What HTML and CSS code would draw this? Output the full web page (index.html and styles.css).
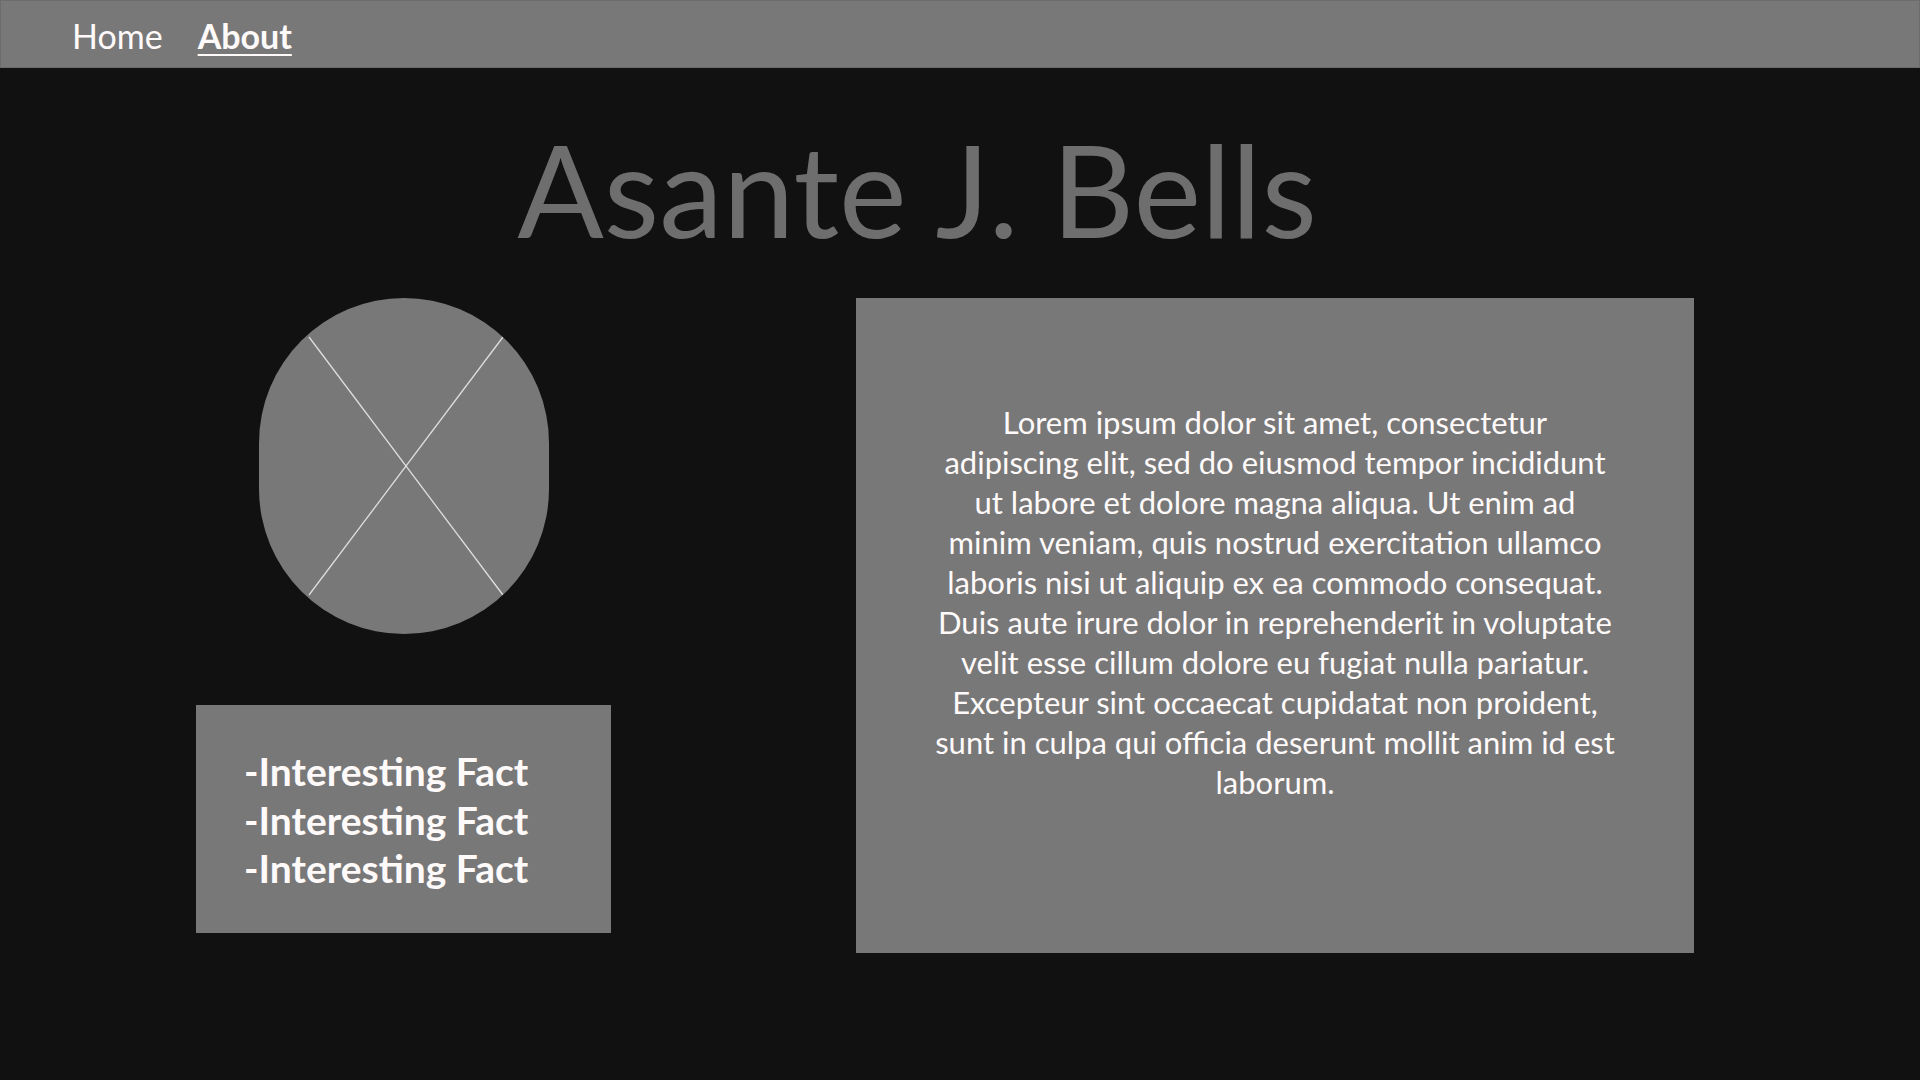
FILE: index.html
```html
<!DOCTYPE html>
<html lang="en">
<head>
    <meta charset="UTF-8">
    <title>About - Asante J. Bells</title>
    <link rel="stylesheet" href="styles.css">
</head>
<body>
    <nav class="topnav">
        <a href="#" class="nav-link">Home</a>
        <a href="#" class="nav-link active">About</a>
    </nav>

    <h1 class="title">Asante J. Bells</h1>

    <main class="content">
        <div class="side">
            <div class="photo">
                <svg viewBox="0 0 290 336" width="290" height="336">
                    <line x1="50" y1="39" x2="244" y2="297" />
                    <line x1="244" y1="39" x2="50" y2="297" />
                </svg>
            </div>

            <ul class="facts">
                <li>-Interesting Fact</li>
                <li>-Interesting Fact</li>
                <li>-Interesting Fact</li>
            </ul>
        </div>

        <section class="bio">
            <p>Lorem ipsum dolor sit amet, consectetur adipiscing elit, sed do eiusmod tempor incididunt ut labore et dolore magna aliqua. Ut enim ad minim veniam, quis nostrud exercitation ullamco laboris nisi ut aliquip ex ea commodo consequat. Duis aute irure dolor in reprehenderit in voluptate velit esse cillum dolore eu fugiat nulla pariatur. Excepteur sint occaecat cupidatat non proident, sunt in culpa qui officia deserunt mollit anim id est laborum.</p>
        </section>
    </main>
</body>
</html>
```

FILE: styles.css
```css
* {
    margin: 0;
    padding: 0;
    box-sizing: border-box;
}

body {
    font-family: Lato, 'Open Sans', sans-serif;
    background: #111111;
    min-height: 100vh;
    color: #fffafa;
}

.topnav {
    height: 68px;
    background: #787878;
    border: 1px solid #6c6c6c;
    display: flex;
    align-items: center;
    gap: 35px;
    padding: 3px 71px 0;
}

.nav-link {
    color: #fffafa;
    font-size: 34px;
    text-decoration: none;
}

.nav-link.active {
    font-weight: 700;
    text-decoration: underline;
    text-decoration-thickness: 2px;
    text-underline-offset: 5px;
}

.title {
    margin-top: 57px;
    padding-right: 86px;
    font-size: 128px;
    font-weight: 400;
    line-height: 1;
    color: #6e6e6e;
    text-align: center;
}

.content {
    margin-top: 45px;
    padding-left: 196px;
    display: flex;
    gap: 245px;
    align-items: flex-start;
}

.side {
    width: 415px;
    display: flex;
    flex-direction: column;
    align-items: center;
    gap: 71px;
}

.photo {
    width: 290px;
    height: 336px;
    border-radius: 145px;
    background: #787878;
    overflow: hidden;
}

.photo svg {
    display: block;
}

.photo line {
    stroke: #dedede;
    stroke-width: 1.3;
}

.facts {
    list-style: none;
    width: 100%;
    height: 228px;
    background: #787878;
    padding: 42px 48px;
    font-size: 39px;
    font-weight: 700;
    line-height: 48.5px;
}

.bio {
    width: 838px;
    height: 655px;
    background: #787878;
    padding: 104px 77px 0;
    text-align: center;
    font-size: 31px;
    line-height: 40px;
}
```
